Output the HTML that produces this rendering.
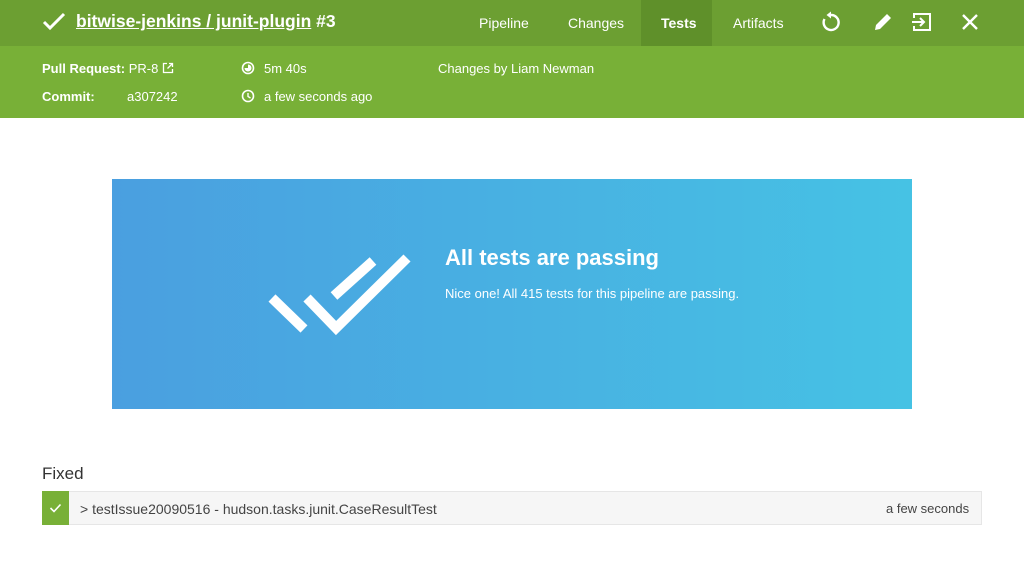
<!DOCTYPE html>
<html><head><meta charset="utf-8"><style>
*{margin:0;padding:0;box-sizing:border-box}
body{width:1024px;height:564px;background:#fff;font-family:"Liberation Sans",sans-serif;position:relative;overflow:hidden;color:#fff}
.top{position:absolute;left:0;top:0;width:1024px;height:46px;background:#6c9f32}
.sub{position:absolute;left:0;top:46px;width:1024px;height:72px;background:#78b037}
.t{position:absolute;white-space:nowrap}
.banner{position:absolute;left:112px;top:179px;width:800px;height:230px;background:linear-gradient(90deg,#4a9fe0,#46c2e4)}
</style></head><body>
<div class="top"></div>
<div class="sub"></div>
<svg style="position:absolute;left:42px;top:12px" width="24" height="20" viewBox="0 0 24 20"><path d="M2 10l6 6L22 2" fill="none" stroke="#fff" stroke-width="3"/></svg>
<div class="t" style="left:76px;top:11px;font-size:17.5px;font-weight:bold"><span style="text-decoration:underline">bitwise-jenkins / junit-plugin</span> #3</div>
<div style="position:absolute;left:641px;top:0;width:71px;height:46px;background:#5f902a"></div>
<div class="t" style="left:479px;top:15px;font-size:14px">Pipeline</div>
<div class="t" style="left:568px;top:15px;font-size:14px">Changes</div>
<div class="t" style="left:661px;top:15px;font-size:14px;font-weight:bold">Tests</div>
<div class="t" style="left:733px;top:15px;font-size:14px">Artifacts</div>
<svg style="position:absolute;left:820px;top:11px" width="22" height="22" viewBox="0 0 22 22"><path d="M11 4A7.5 7.5 0 1 1 4.5 8" fill="none" stroke="#fff" stroke-width="2.4"/><path d="M11 0.5v7L6.5 4z" fill="#fff"/></svg>
<svg style="position:absolute;left:872px;top:11px" width="22" height="22" viewBox="0 0 22 22"><path d="M3 19l1-5L15 3l4 4L8 18z" fill="#fff"/></svg>
<svg style="position:absolute;left:911px;top:11px" width="22" height="22" viewBox="0 0 22 22"><path d="M3 7V3h16v16H3v-4" fill="none" stroke="#fff" stroke-width="2"/><path d="M1 11h11M9 7l4 4-4 4" fill="none" stroke="#fff" stroke-width="2"/></svg>
<svg style="position:absolute;left:960px;top:12px" width="20" height="20" viewBox="0 0 20 20"><path d="M3 3l14 14M17 3L3 17" stroke="#fff" stroke-width="2.4"/></svg>
<div class="t" style="left:42px;top:61px;font-size:13px"><b>Pull Request:</b> PR-8</div>
<svg style="position:absolute;left:162px;top:62px" width="12" height="12" viewBox="0 0 12 12"><path d="M5 1.5H1.5v9h9V7" fill="none" stroke="#fff" stroke-width="1.3"/><path d="M7 1.5h3.5V5M10.5 1.5L5.5 6.5" fill="none" stroke="#fff" stroke-width="1.3"/></svg>
<div class="t" style="left:42px;top:89px;font-size:13px;font-weight:bold">Commit:</div>
<div class="t" style="left:127px;top:89px;font-size:13px">a307242</div>
<svg style="position:absolute;left:241px;top:61px" width="14" height="14" viewBox="0 0 14 14"><circle cx="7" cy="7" r="5.5" fill="none" stroke="#fff" stroke-width="1.6"/><path d="M7 7V3.5A3.5 3.5 0 1 1 3.5 7z" fill="#fff"/></svg>
<svg style="position:absolute;left:241px;top:89px" width="14" height="14" viewBox="0 0 14 14"><circle cx="7" cy="7" r="5.5" fill="none" stroke="#fff" stroke-width="1.6"/><path d="M7 4v3.5l2.5 1.5" fill="none" stroke="#fff" stroke-width="1.4"/></svg>
<div class="t" style="left:264px;top:61px;font-size:13px">5m 40s</div>
<div class="t" style="left:264px;top:89px;font-size:13px">a few seconds ago</div>
<div class="t" style="left:438px;top:61px;font-size:13px">Changes by Liam Newman</div>
<div class="banner"></div>
<svg style="position:absolute;left:0;top:0" width="1024" height="564"><g stroke="#fff" stroke-width="10" fill="none"><path d="M272 298l32 31"/><path d="M307 298l29 30 71-70"/><path d="M334 296l39-35"/></g></svg>
<div class="t" style="left:445px;top:245px;font-size:22px;font-weight:bold">All tests are passing</div>
<div class="t" style="left:445px;top:286px;font-size:13px">Nice one! All 415 tests for this pipeline are passing.</div>
<div class="t" style="left:42px;top:464px;font-size:17px;color:#333">Fixed</div>
<div style="position:absolute;left:42px;top:491px;width:940px;height:34px;background:#f6f6f6;border:1px solid #e6e6e6"></div>
<div style="position:absolute;left:42px;top:491px;width:27px;height:34px;background:#78b037"></div>
<svg style="position:absolute;left:49px;top:502px" width="13" height="12" viewBox="0 0 13 12"><path d="M1.5 6l3.5 3.5L11.5 2.5" fill="none" stroke="#fff" stroke-width="1.6"/></svg>
<div class="t" style="left:80px;top:501px;font-size:14px;color:#444">&gt; testIssue20090516 - hudson.tasks.junit.CaseResultTest</div>
<div class="t" style="left:886px;top:501px;font-size:13px;color:#444">a few seconds</div>
</body></html>
